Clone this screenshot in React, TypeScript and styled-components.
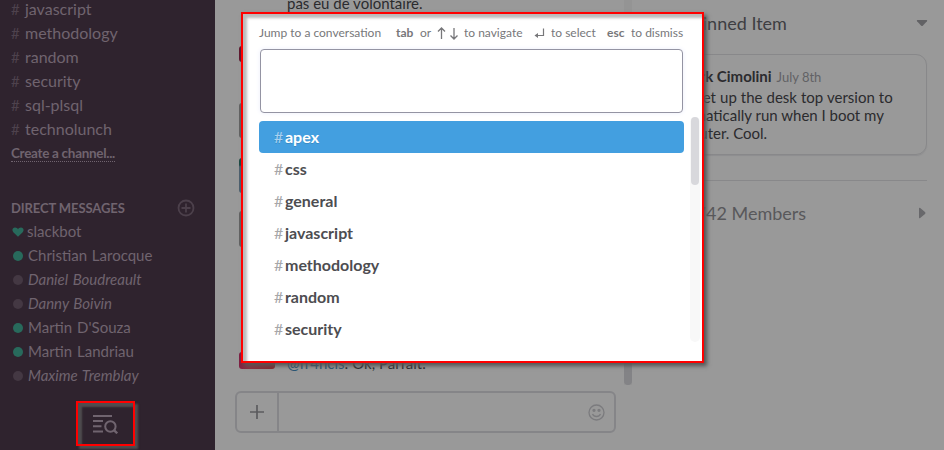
import React from "react";
import styled, { createGlobalStyle } from "styled-components";

const GlobalStyle = createGlobalStyle`
  *, *::before, *::after { box-sizing: border-box; }
  body { margin: 0; overflow: hidden; font-family: Lato, "Liberation Sans", sans-serif; }
`;

const Page = styled.div`
  position: relative;
  display: flex;
  width: 944px;
  height: 450px;
  overflow: hidden;
  background: #999;
  color: #2b2b2e;
`;

/* ---------- sidebar ---------- */

const Sidebar = styled.nav`
  width: 215px;
  flex: none;
  padding-left: 11px;
  background: #2f232e;
  color: #70646f;
  font-size: 15px;
  overflow: hidden;
`;

const ChannelList = styled.div`
  margin-top: -3px;
  font-size: 16px;
`;

const Row = styled.div<{ $away?: boolean }>`
  display: flex;
  align-items: center;
  height: 24px;
  line-height: 24px;
  white-space: nowrap;
  font-style: ${(p) => (p.$away ? "italic" : "normal")};
`;

const Hash = styled.span`
  width: 14px;
  flex: none;
  font-size: 15px;
  color: #4e424d;
`;

const CreateRow = styled(Row)`
  height: 23px;
`;

const CreateLink = styled.a`
  display: inline-block;
  margin-top: 3px;
  height: 16px;
  line-height: 14px;
  font-size: 13.5px;
  font-weight: 700;
  letter-spacing: -0.3px;
  border-bottom: 1px dotted #70646f;
`;

const SectionHead = styled.div`
  display: flex;
  align-items: center;
  justify-content: space-between;
  height: 24px;
  margin-top: 32px;
  padding-right: 20px;
  font-size: 13px;
  font-weight: 700;
  letter-spacing: -0.1px;
`;

const People = styled.div`
  margin-top: -1px;
`;

const PersonName = styled.span`
  word-spacing: 1px;
`;

const Presence = styled.span<{ $on?: boolean }>`
  width: 10px;
  height: 10px;
  flex: none;
  margin: 2px 5px 0 2px;
  border-radius: 50%;
  background: ${(p) => (p.$on ? "#286a5c" : "#443843")};
`;

const Heart = styled.svg`
  width: 12px;
  height: 10px;
  flex: none;
  margin: 1px 3px 0 1px;
`;

const QuickSwitch = styled.button`
  display: block;
  width: 59px;
  height: 45px;
  margin: 14px 0 0 65px;
  padding: 0 0 0 15px;
  border: 2px solid #f00;
  background: transparent;
  box-shadow: inset 4px 4px 2px #4f4c4e, 3px 3px 2px #4f4c4e;
  svg { display: block; }
`;

/* ---------- conversation ---------- */

const Chat = styled.main`
  display: flex;
  flex-direction: column;
  width: 417px;
  flex: none;
`;

const Messages = styled.div`
  display: flex;
  height: 385px;
`;

const Feed = styled.div`
  display: flex;
  flex-direction: column;
  flex: 1;
  padding-left: 24px;
  font-size: 15px;
`;

const TopLine = styled.div`
  height: 46px;
  padding-left: 48px;
  line-height: 18px;
  margin-top: -6px;
  margin-bottom: 6px;
`;

const Avatar = styled.div<{ $h: number; $gap: number; $bg: string }>`
  width: 36px;
  flex: none;
  height: ${(p) => p.$h}px;
  margin-bottom: ${(p) => p.$gap}px;
  border-radius: 3px;
  background: ${(p) => p.$bg};
`;

const LastMessage = styled.div`
  display: flex;
  gap: 12px;
  line-height: 22px;
`;

const LastText = styled.div`
  line-height: 22px;
`;

const Mention = styled.span`
  color: #2a5674;
`;

const FeedTrack = styled.div`
  display: flex;
  align-items: flex-end;
  width: 8px;
  background: #949494;
`;

const FeedThumb = styled.div`
  width: 8px;
  height: 120px;
  border-radius: 4px;
  background: #838386;
`;

const Composer = styled.div`
  display: flex;
  width: 381px;
  height: 42px;
  margin: 6px 0 0 20px;
  border: 2px solid #858588;
  border-radius: 6px;
`;

const Attach = styled.div`
  display: flex;
  align-items: center;
  justify-content: center;
  width: 42px;
  border-right: 2px solid #858588;
`;

const Emoji = styled.div`
  display: flex;
  align-items: center;
  margin-left: auto;
  padding-right: 9px;
`;

/* ---------- details ---------- */

const Details = styled.aside`
  flex: 1;
  padding: 0 16px 0 16px;
`;

const DetailHead = styled.div<{ $muted?: boolean; $shift: number }>`
  display: flex;
  align-items: center;
  justify-content: space-between;
  height: 54px;
  padding-left: ${(p) => p.$shift}px;
  padding-bottom: ${(p) => (p.$muted ? 2 : 8)}px;
  font-size: 18px;
  white-space: nowrap;
  color: ${(p) => (p.$muted ? "#58585b" : "#3e3e42")};
`;

const PinCard = styled.div`
  height: 101px;
  margin-right: 1px;
  padding: 12px 16px 0 14px;
  border: 1px solid #88888a;
  border-radius: 11px;
  box-shadow: 0 1px 1px #8d8d8f;
  font-size: 15px;
  line-height: 18px;
  white-space: nowrap;
`;

const PinHead = styled.div`
  display: flex;
  align-items: baseline;
  gap: 5px;
  height: 21px;
  padding-left: 15px;
`;

const PinDate = styled.span`
  font-size: 13px;
  color: #626265;
`;

const PinLine = styled.div<{ $x: number; $track?: number }>`
  padding-left: ${(p) => p.$x}px;
  word-spacing: ${(p) => p.$track ?? 0}px;
`;

const Rule = styled.div`
  height: 1px;
  margin: 25px 1px 6px 0;
  background: #88888a;
`;

/* ---------- quick switcher ---------- */

const Switcher = styled.section`
  position: absolute;
  left: 241px;
  top: 12px;
  width: 463px;
  height: 351px;
  padding: 13px 2px 0 16px;
  border: 2px solid #f00;
  background: #fff;
  box-shadow: inset 4px 4px 3px #bbb, 3px 3px 4px #555;
`;

const Hints = styled.div`
  display: flex;
  align-items: center;
  width: 424px;
  height: 12px;
  font-size: 12px;
  line-height: 12px;
  color: #77777a;
  white-space: nowrap;
`;

const Hint = styled.span<{ $gap: number; $w: number }>`
  flex: none;
  display: flex;
  width: ${(p) => p.$w}px;
  margin-right: ${(p) => p.$gap}px;
`;

const Key = styled(Hint)`
  font-weight: 700;
`;

const SearchInput = styled.input`
  display: block;
  width: 423px;
  height: 64px;
  margin: 10px 0 8px 1px;
  border: 1px solid #9494a3;
  border-radius: 4px;
  box-shadow: 0 0 5px #eceefb;
  outline: none;
`;

const Results = styled.div`
  display: flex;
  gap: 6px;
`;

const Options = styled.div`
  flex: none;
  width: 425px;
`;

const Option = styled.div<{ $active?: boolean }>`
  display: flex;
  align-items: center;
  height: 32px;
  padding: 0 0 1px 15px;
  border-radius: 4px;
  font-size: 16px;
  line-height: 20px;
  font-weight: 700;
  color: ${(p) => (p.$active ? "#fff" : "#4d4d51")};
  background: ${(p) => (p.$active ? "#439fe0" : "transparent")};
  text-shadow: ${(p) => (p.$active ? "0 1px 0 rgba(0,0,0,.15)" : "none")};
`;

const OptionHash = styled.span<{ $active?: boolean }>`
  width: 11px;
  font-weight: 400;
  color: ${(p) => (p.$active ? "#a9d2f1" : "#a6a6a9")};
`;

const Track = styled.div`
  flex: none;
  width: 10px;
  height: 225px;
  margin-top: -4px;
  padding: 0 1px;
  border-radius: 5px;
  background: #f8f8f8;
`;

const Thumb = styled.div`
  height: 68px;
  border-radius: 4px;
  background: #d8d8dc;
`;

const channels = ["javascript", "methodology", "random", "security", "sql-plsql", "technolunch"];
const people = [
  { name: "Christian Larocque", on: true },
  { name: "Daniel Boudreault", on: false },
  { name: "Danny Boivin", on: false },
  { name: "Martin D'Souza", on: true },
  { name: "Martin Landriau", on: true },
  { name: "Maxime Tremblay", on: false },
];
const results = ["apex", "css", "general", "javascript", "methodology", "random", "security"];

export default function App() {
  return (
    <Page>
      <GlobalStyle />
      <Sidebar>
        <ChannelList>
          {channels.map((c) => (
            <Row key={c}>
              <Hash>#</Hash>
              {c}
            </Row>
          ))}
        </ChannelList>
        <CreateRow>
          <CreateLink>Create a channel...</CreateLink>
        </CreateRow>
        <SectionHead>
          DIRECT MESSAGES
          <svg width="18" height="18" viewBox="0 0 18 18" fill="none" stroke="#4c404b" strokeWidth="1.8">
            <circle cx="9" cy="9" r="7.5" />
            <path d="M9 4.5v9M4.5 9h9" />
          </svg>
        </SectionHead>
        <People>
          <Row>
            <Heart viewBox="0 0 12 10">
              <path d="M6 9.8 1.300 5.200C-.6 3 .9.4 3 .4 4.500.4 5.500 1.200 6 2.200 6.500 1.200 7.500.4 9 .4c2.100 0 3.600 2.600 1.700 4.800z" fill="#286a5c" />
            </Heart>
            slackbot
          </Row>
          {people.map((p) => (
            <Row key={p.name} $away={!p.on}>
              <Presence $on={p.on} />
              <PersonName>{p.name}</PersonName>
            </Row>
          ))}
        </People>
        <QuickSwitch aria-label="Quick switcher">
          <svg width="26" height="20" viewBox="0 0 26 20" fill="none" stroke="#70646f" strokeWidth="2">
            <path d="M0 2h19M0 7h10M0 12.200h8.500M0 17.500h10" />
            <circle cx="17.400" cy="12.500" r="5.200" />
            <path d="m21.200 16.300 3 3" strokeWidth="2.400" />
          </svg>
        </QuickSwitch>
      </Sidebar>

      <Chat>
        <Messages>
          <Feed>
            <TopLine>pas eu de volontaire.</TopLine>
            <Avatar $h={16} $gap={41} $bg="#5f1a30" />
            <Avatar $h={35} $gap={20} $bg="#626262" />
            <Avatar $h={35} $gap={18} $bg="linear-gradient(#1d4a43 20%, #4d606e 25%)" />
            <Avatar $h={36} $gap={105} $bg="#626262" />
            <LastMessage>
              <Avatar $h={17} $gap={0} $bg="linear-gradient(100deg, #7b1d43, #8c3040 35%, #82292c)" />
              <LastText>
                <Mention>@fr4ncis</Mention>: Ok, Parfait.
              </LastText>
            </LastMessage>
          </Feed>
          <FeedTrack>
            <FeedThumb />
          </FeedTrack>
        </Messages>
        <Composer>
          <Attach>
            <svg width="14" height="14" viewBox="0 0 14 14" stroke="#5c5c5f" strokeWidth="1.7">
              <path d="M7 0v14M0 7h14" />
            </svg>
          </Attach>
          <Emoji>
            <svg width="17" height="17" viewBox="0 0 17 17" fill="none" stroke="#7b7b7e" strokeWidth="1.3">
              <circle cx="8.5" cy="8.5" r="7.5" />
              <path d="M4.5 10c1.500 3.300 6.500 3.300 8 0" />
              <circle cx="6" cy="6.3" r="1" fill="#7b7b7e" />
              <circle cx="11" cy="6.3" r="1" fill="#7b7b7e" />
            </svg>
          </Emoji>
        </Composer>
      </Chat>

      <Details>
        <DetailHead $shift={29}>
          1 Pinned Item
          <svg width="12" height="18" viewBox="0 0 12 18" fill="#626265">
            <path d="M1.500 6h9q1.300 0 .4 1.200L7 11.500q-1 1-2 0L1.100 7.200Q.2 6 1.500 6z" />
          </svg>
        </DetailHead>
        <PinCard>
          <PinHead>
            <b>Mark Cimolini</b>
            <PinDate>July 8th</PinDate>
          </PinHead>
          <PinLine $x={25} $track={0.2}>I set up the desk top version to</PinLine>
          <PinLine $x={1}>automatically run when I boot my</PinLine>
          <PinLine $x={0}>computer. Cool.</PinLine>
        </PinCard>
        <Rule />
        <DetailHead $muted $shift={33}>
          1,742 Members
          <svg width="10" height="14" viewBox="0 0 10 14" fill="#68686b">
            <path d="M1 2.500q0-1.300 1.200-.5L7 6q1 1 0 2l-4.800 4q-1.200.8-1.200-.5z" />
          </svg>
        </DetailHead>
      </Details>

      <Switcher>
        <Hints>
          <Hint $w={122} $gap={15}>Jump to a conversation</Hint>
          <Key $w={18} $gap={6}>tab</Key>
          <Hint $w={11} $gap={6}>or</Hint>
          <Hint $w={22} $gap={5}>
            <svg width="22" height="13" viewBox="0 0 22 13" fill="none" stroke="#77777a" strokeWidth="1.3">
              <path d="M4.500 12V1M1 4.500 4.500 1 8 4.500M17 1v11M13.500 8.500 17 12l3.500-3.500" />
            </svg>
          </Hint>
          <Hint $w={59} $gap={11}>to navigate</Hint>
          <Hint $w={11} $gap={6}>
            <svg width="11" height="12" viewBox="0 0 11 12" fill="none" stroke="#77777a" strokeWidth="1.2">
              <path d="M9.500 1.500v7H1" />
              <path d="M4 6v5L.5 8.500z" fill="#77777a" stroke="none" />
            </svg>
          </Hint>
          <Hint $w={45} $gap={11}>to select</Hint>
          <Key $w={18} $gap={6}>esc</Key>
          <Hint $w={52} $gap={0}>to dismiss</Hint>
        </Hints>
        <SearchInput aria-label="Jump to a conversation" />
        <Results>
          <Options>
            {results.map((r, i) => (
              <Option key={r} $active={i === 0}>
                <OptionHash $active={i === 0}>#</OptionHash>
                {r}
              </Option>
            ))}
          </Options>
          <Track>
            <Thumb />
          </Track>
        </Results>
      </Switcher>
    </Page>
  );
}
